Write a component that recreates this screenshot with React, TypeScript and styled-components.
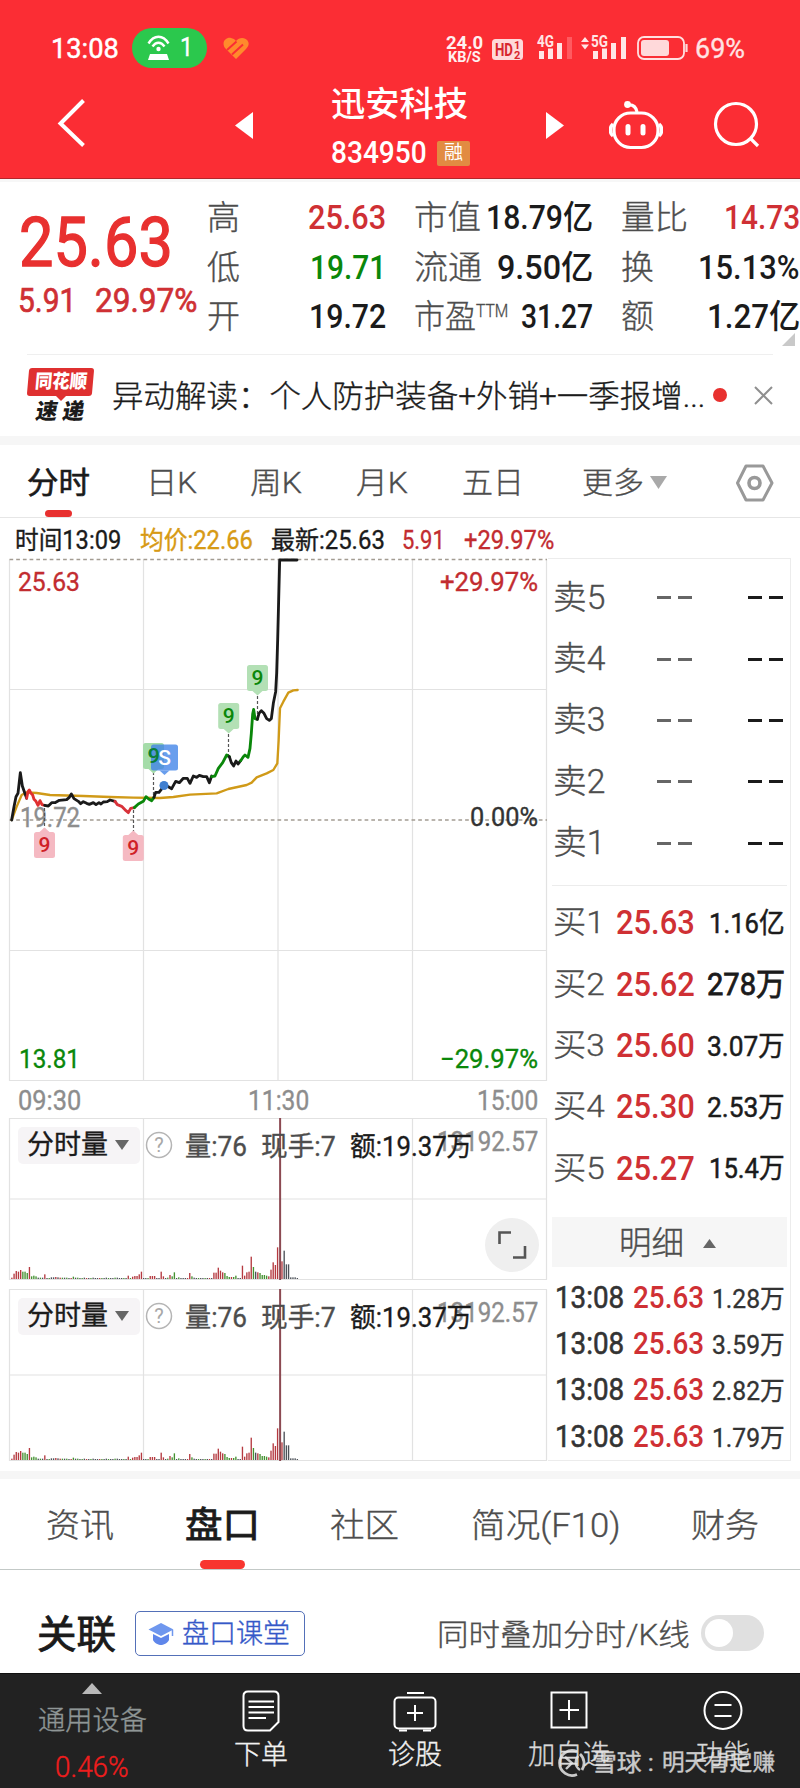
import React, { useLayoutEffect, useRef, useState } from "react";
import styled, { createGlobalStyle } from "styled-components";

const SANS = `Roboto, "Noto Sans CJK SC", sans-serif`;

const Global = createGlobalStyle`
  * { box-sizing: border-box; }
  body { margin: 0; background: #fff; font-family: ${SANS}; }
  svg { display: block; flex: none; }
`;

/* ---------- text that is condensed or stretched to a set width ---------- */
const FitBox = styled.span<{ $w: number; $ml: number; $lh: number; $size: number; $color: string; $weight: number; $stroke: number }>`
  display: block;
  flex: none;
  width: ${(p) => p.$w}px;
  margin-left: ${(p) => p.$ml}px;
  height: ${(p) => p.$lh}px;
  line-height: ${(p) => p.$lh}px;
  font-size: ${(p) => p.$size}px;
  font-weight: ${(p) => p.$weight};
  color: ${(p) => p.$color};
  -webkit-text-stroke: ${(p) => p.$stroke}px ${(p) => p.$color};
  white-space: pre;
`;
const FitInner = styled.span`
  display: inline-block;
  transform-origin: left center;
`;

type FitProps = { children: string; w: number; size: number; ml?: number; lh?: number; color?: string; weight?: number; stroke?: number };

function Fit({ children, w, size, ml = 0, lh = 40, color = "#1b1b1b", weight = 400, stroke }: FitProps) {
  const ref = useRef<HTMLSpanElement>(null);
  const [k, setK] = useState(1);
  useLayoutEffect(() => {
    if (ref.current) setK(w / ref.current.offsetWidth);
  }, [w, size, children, weight]);
  return (
    <FitBox $w={w} $ml={ml} $lh={lh} $size={size} $color={color} $weight={weight} $stroke={stroke ?? (weight <= 400 ? 0.35 : 0)}>
      <FitInner ref={ref} style={{ transform: `scaleX(${k})` }}>{children}</FitInner>
    </FitBox>
  );
}

/* ---------- page ---------- */
const Page = styled.div`
  width: 800px;
  height: 1788px;
  overflow: hidden;
  display: flex;
  flex-direction: column;
  background: #fff;
`;
const Band = styled.div<{ $h: number }>`
  height: ${(p) => p.$h}px;
  background: #f6f6f6;
  flex: none;
`;

/* ---------- header ---------- */
const Header = styled.header`
  height: 179px;
  background: #fb2d34;
  border-bottom: 1px solid #b3262b;
  flex: none;
`;
const StatusBar = styled.div`
  display: flex;
  align-items: center;
  height: 80px;
  padding: 17px 0 0 51px;
`;
const HotspotPill = styled.div`
  display: flex;
  align-items: center;
  width: 75px;
  height: 40px;
  margin: -2px 0 0 13px;
  padding-left: 15px;
  border-radius: 20px;
  background: #2bc84d;
`;
const Speed = styled.div`
  margin: 2px 0 0 197px;
`;
const NavBar = styled.div`
  display: flex;
  height: 98px;
  padding-left: 57px;
`;
const NavIcon = styled.div<{ $ml: number; $mt: number }>`
  margin: ${(p) => p.$mt}px 0 0 ${(p) => p.$ml}px;
`;
const TitleBlock = styled.div`
  width: 140px;
  margin-left: 77px;
`;
const CodeRow = styled.div`
  display: flex;
  align-items: center;
`;
const MarginBadge = styled.span`
  width: 33px;
  height: 25px;
  margin-left: 10px;
  border-radius: 2px;
  background: #e28b42;
  color: #fff;
  font-size: 19px;
  line-height: 24px;
  text-align: center;
`;

/* ---------- quote ---------- */
const Quote = styled.section`
  display: flex;
  height: 175px;
  border-top: 3px solid #f7f7f7;
  flex: none;
`;
const PriceCol = styled.div`
  width: 207px;
  padding: 28px 0 0 18px;
  flex: none;
`;
const Row = styled.div<{ $h: number; $pl?: number; $pt?: number }>`
  display: flex;
  align-items: center;
  height: ${(p) => p.$h}px;
  padding: ${(p) => p.$pt ?? 0}px 0 0 ${(p) => p.$pl ?? 0}px;
`;
const StatCol = styled.div<{ $w: number }>`
  width: ${(p) => p.$w}px;
  padding-top: 11px;
  flex: none;
`;
const StatRow = styled.div`
  display: flex;
  justify-content: space-between;
  height: 49.7px;
  align-items: center;
`;
const Super = styled.sup`
  margin-top: -13px;
  line-height: 1;
`;
const Corner = styled.div`
  width: 13px;
  height: 13px;
  margin: -9px 5px 0 auto;
  background: #c9c9c9;
  clip-path: polygon(100% 0, 100% 100%, 0 100%);
`;

/* ---------- news ---------- */
const News = styled.section`
  display: flex;
  height: 82px;
  margin: 0 27px;
  border-top: 1px solid #efefef;
  flex: none;
`;
const NewsLogo = styled.div`
  width: 67px;
  margin: 13px 0 0 1px;
`;
const LogoTop = styled.div`
  display: flex;
  justify-content: center;
  height: 28px;
  background: #df3030;
  border-radius: 3px;
  transform: skewX(-5deg);
`;
const LogoBottom = styled.div`
  display: flex;
  margin: -1px 0 0 8px;
  transform: skewX(-10deg);
`;
const Dot = styled.i`
  width: 14px;
  height: 14px;
  margin: 33px 27px 0 8px;
  border-radius: 50%;
  background: #e8312f;
`;

/* ---------- tabs ---------- */
const Tabs = styled.nav<{ $h: number; $pt: number; $line: string }>`
  height: ${(p) => p.$h}px;
  padding-top: ${(p) => p.$pt}px;
  border-bottom: 1px solid ${(p) => p.$line};
  flex: none;
`;
const Underline = styled.i<{ $ml: number; $w: number; $h: number; $mt: number; $color: string }>`
  display: block;
  width: ${(p) => p.$w}px;
  height: ${(p) => p.$h}px;
  margin: ${(p) => p.$mt}px 0 0 ${(p) => p.$ml}px;
  border-radius: 5px;
  background: ${(p) => p.$color};
`;

/* ---------- body of the charts and order book ---------- */
const Body = styled.section`
  display: flex;
  height: 913px;
  flex: none;
`;
const ChartCol = styled.div`
  width: 548px;
  padding-left: 8px;
  flex: none;
`;
const AxisRow = styled.div`
  display: flex;
  height: 37px;
  align-items: center;
  padding: 2px 0 0 10px;
`;
const VolPanel = styled.div<{ $h: number }>`
  position: relative;
  height: ${(p) => p.$h}px;
`;
const VolHead = styled.div`
  position: absolute;
  left: 0;
  top: 8px;
  display: flex;
  align-items: center;
  height: 38px;
`;
const VolButton = styled.div`
  display: flex;
  align-items: center;
  width: 122px;
  height: 37px;
  margin-left: 10px;
  padding-left: 9px;
  border-radius: 5px;
  background: #f6f4f6;
`;
const VolMax = styled.div`
  position: absolute;
  right: 10px;
  top: 4px;
`;
const Fullscreen = styled.div`
  position: absolute;
  right: 9px;
  bottom: 8px;
  width: 54px;
  height: 54px;
  border-radius: 50%;
  background: #efefef;
  display: grid;
  place-items: center;
`;
const Book = styled.div`
  width: 243px;
  height: 903px;
  border: 1px solid #ececec;
  border-left: 0;
  padding: 8px 3px 0 4px;
`;
const BookRow = styled.div`
  display: flex;
  align-items: center;
  height: 61.35px;
  padding-left: 1px;
`;
const Push = styled.div<{ $pt: number }>`
  margin-left: auto;
  padding: ${(p) => p.$pt}px 2px 0 0;
`;
const Dashes = styled.span<{ $c: string; $ml: number }>`
  display: flex;
  gap: 7px;
  margin-left: ${(p) => p.$ml}px;
  &::before, &::after { content: ""; width: 14px; height: 3px; background: ${(p) => p.$c}; }
`;
const BookRule = styled.div`
  height: 1px;
  margin: 11px 0 6px;
  background: #ececec;
`;
const DetailBar = styled.div`
  display: flex;
  align-items: center;
  height: 50px;
  margin: 19px 0 7px;
  padding: 2px 0 0 67px;
  background: #f6f6f6;
`;
const TradeRow = styled.div`
  display: flex;
  align-items: center;
  height: 46.4px;
  padding-left: 3px;
`;

/* ---------- related row ---------- */
const Related = styled.section`
  display: flex;
  height: 103px;
  padding: 41px 0 0 37px;
  flex: none;
`;
const ClassButton = styled.div`
  display: flex;
  align-items: center;
  width: 170px;
  height: 45px;
  margin-left: 19px;
  padding-left: 12px;
  border: 1.5px solid #5470b8;
  border-radius: 5px;
`;
const Toggle = styled.div`
  width: 63px;
  height: 36px;
  margin: 4px 0 0 11px;
  border-radius: 18px;
  background: #e0e0e0;
  padding: 4px;
  &::before { content: ""; display: block; width: 28px; height: 28px; border-radius: 50%; background: #fff; }
`;

/* ---------- footer ---------- */
const Footer = styled.footer`
  position: relative;
  display: flex;
  height: 116px;
  background: #222;
  border-top: 1px solid #111;
  flex: none;
`;
const IndexCell = styled.div`
  width: 184px;
  padding: 9px 0 0 38px;
`;
const FootItem = styled.div`
  width: 154px;
  display: flex;
  flex-direction: column;
  align-items: center;
  flex: none;
`;
const FootIcon = styled.div`
  height: 61px;
  padding-top: 16px;
`;
const Watermark = styled.div`
  position: absolute;
  left: 557px;
  top: 74px;
  display: flex;
  align-items: center;
  height: 30px;
  opacity: 0.86;
`;

/* ---------- data ---------- */
type Cell = [string, string, number, number, string];
const INK = "#1b1b1b";
const GREY = "#4d4d4d";
const RED = "#cf3034";
const GREEN = "#0a870a";

const stats: { w: number; rows: Cell[] }[] = [
  { w: 179, rows: [["高", "25.63", 33, 78, RED], ["低", "19.71", 33, 76, GREEN], ["开", "19.72", 33, 77, INK]] },
  { w: 179, rows: [["市值", "18.79亿", 67, 107, INK], ["流通", "9.50亿", 68, 96, INK], ["市盈", "31.27", 62, 72, INK]] },
  { w: 179, rows: [["量比", "14.73", 67, 76, RED], ["换", "15.13%", 33, 102, INK], ["额", "1.27亿", 33, 93, INK]] },
];

const bids: [string, string, string, number, number][] = [
  ["买1", "25.63", "1.16亿", 76, 28], ["买2", "25.62", "278万", 78, 31], ["买3", "25.60", "3.07万", 78, 28], ["买4", "25.30", "2.53万", 78, 28], ["买5", "25.27", "15.4万", 76, 28],
];
const trades = ["1.28万", "3.59万", "2.82万", "1.79万"];

const volume: [number, string][] = (
  "4r 16r 24r 22r 27r 22g 22g 18g 36r 8g 10g 8g 4k 4g 4k 14r 3k 3g 5k 5k 6r 5k 4r 4g 4k 4g 3k 3r 7g 4k 4g 3k 3g 4k 3r 3k 3g 4k 3k 3k 3r 3g 3k 4k 3g 3k 3k 4g 4k 3k 3k 3g 3k 10r 3g 7r 9r 9r 14r 22r 3k 3k 3g 9r 9r 9r 3k 3k 22r 8r 3k 4g 12r 8g 20g 3k 5g 3k 3k 3k 3r 18r 8g 4k 3k 3g 3k 3k 3g 3k 3r 3k 19r 19r 34r 25r 20r 18g 9g 6g 6r 6g 10g 3k 3k 40r 10r 20r 22r 67r 36g 22k 20r 18g 12g 12g 10g 8r 28r 50r 42r 95r 485w 53r 85k 44k 44k 5k 5k 5k 3k"
).split(" ").map((s) => [parseInt(s, 10) / 3, s.slice(-1)]);
const barColor: Record<string, string> = { r: "#b53a40", g: "#459232", k: "#4c5158", w: "#8c4a52" };

/* ---------- drawings ---------- */
const Tri = ({ w, h, c, up, ml = 0 }: { w: number; h: number; c: string; up?: boolean; ml?: number }) => (
  <svg width={w + ml} height={h} viewBox={`${-ml} 0 ${w + ml} ${h}`}>
    <path d={up ? `M0 ${h}L${w / 2} 0L${w} ${h}Z` : `M0 0H${w}L${w / 2} ${h}Z`} fill={c} />
  </svg>
);

const StatusIcons = () => (
  <svg width="203" height="28" viewBox="1 0 203 28" fill="#ffe6e6" fontFamily={SANS} fontWeight="700">
    <rect x="1" y="4" width="31" height="21" rx="3.5" fill="#ffd9da" />
    <text x="4" y="21" fontSize="18" fill="#d8262e" textLength="18" lengthAdjust="spacingAndGlyphs">HD</text>
    <text x="23" y="14" fontSize="11" fill="#d8262e">1</text>
    <text x="23" y="24" fontSize="11" fill="#d8262e">2</text>
    <text x="46" y="11.500" fontSize="16" textLength="17" lengthAdjust="spacingAndGlyphs">4G</text>
    <rect x="48" y="16" width="5" height="8" /><rect x="57" y="13.500" width="5" height="10.500" /><rect x="66" y="8" width="5" height="16" />
    <rect x="76" y="2" width="5" height="22" fill="#ff5a60" />
    <path d="M90 7l4-5 4 5zM90 9.500h8l-4 5z" />
    <text x="100" y="11.500" fontSize="16" textLength="17" lengthAdjust="spacingAndGlyphs">5G</text>
    <rect x="102" y="16" width="5" height="8" /><rect x="111" y="13.500" width="5" height="10.500" /><rect x="120" y="8" width="5" height="16" /><rect x="130" y="2" width="5" height="22" />
    <rect x="147" y="2" width="46" height="22" rx="6" fill="none" stroke="#ffe0e0" strokeWidth="1.800" />
    <rect x="150" y="5" width="28" height="16" rx="3" fill="#ffd9da" />
    <path d="M195.500 9v8" stroke="#ffd9da" strokeWidth="2.200" />
  </svg>
);

function Marker({ x, y, c, t, label, down, w = 21, h = 26 }: { x: number; y: number; c: string; t: string; label: string; down?: boolean; w?: number; h?: number }) {
  const l = x - w / 2;
  return (
    <g>
      <rect x={l} y={y} width={w} height={h} rx="2.500" fill={c} />
      <path d={down ? `M${x - 5} ${y + h}h10l-5 4.500z` : `M${x - 5} ${y}h10l-5-4.500z`} fill={c} />
      <text x={x} y={y + 20} fontSize="21" fontWeight="500" fill={t} textAnchor="middle">{label}</text>
    </g>
  );
}

const lines: [string, string][] = [
  ["#1a1a1a", "35,540 42,500 48,470 54,460 61,398 67,438 73,455 80,475"],
  ["#e03030", "80,475 84,455 88,450 93,460 98,465 102,478 108,484 114,496 120,482 126,494 134,496"],
  ["#1a1a1a", "134,496 145,498 155,488 165,488 178,481 200,479 208,472 214,462 222,476 235,484 242,491 250,485 260,490 268,493 280,488 288,494 297,488 303,492 310,486 322,485 330,480 345,484"],
  ["#d8323a", "345,484 352,494 365,499 378,512 385,518 392,505 403,503"],
  ["#0a870a", "403,503 415,492 430,484 438,470 446,477 455,482 462,472"],
  ["#1a1a1a", "462,472 467,457 477,457 484,448 492,436 505,440 515,446 527,424 538,428 550,415 562,415 570,430 580,408 590,412 598,406 610,410 620,410 628,428 635,408"],
  ["#0a870a", "635,410 645,408 655,385 668,368 680,345 688,350"],
  ["#1a1a1a", "688,350 694,368 701,378 708,363 714,372 722,362"],
  ["#0a870a", "722,362 730,350 735,345 744,352 750,325 754,280 758,222 761,208 765,236 772,238"],
  ["#1a1a1a", "772,238 777,220 784,212 792,220 800,236 808,241 814,236 820,190 827,155 830,100 833,0 839,-240 891,-240"],
];

const PriceChart = () => (
  <svg width="540" height="523" viewBox="8 558 540 523" fontFamily={SANS} fontSize="26">
    <path d="M9.500 559.500V1080.500H546.500V559.500M143.500 559.500V1081M278 559.500V1081M412.500 559.500V1081M9.500 689.500H547M9.500 950.500H547" fill="none" stroke="#e2e2e2" strokeWidth="1.200" />
    <path d="M9.500 559.500H547M9.500 820H547" stroke="#a39c92" strokeWidth="1.500" strokeDasharray="3.700 3" />
    <text x="20" y="827" fill="#8d8d8d" fontSize="27" stroke="#8d8d8d" strokeWidth=".4" textLength="60" lengthAdjust="spacingAndGlyphs">19.72</text>
    <path d="M44.500 808v22M133.500 810v22M153.500 772v30M228.500 734v24M257.500 696v24" stroke="#555" strokeWidth="1.200" strokeDasharray="3 2" />
    <g transform="translate(0 640) scale(.33333)" fill="none" strokeLinejoin="round" strokeLinecap="round">
      <polyline stroke="#d09a18" strokeWidth="7" points="35,540 50,500 65,465 80,457 110,459 150,465 250,468 330,471 400,473 480,474 520,471 570,464 650,460 685,447 740,435 755,428 770,412 800,400 820,390 832,370 836,300 840,205 850,185 865,158 880,151 893,150" />
      {lines.map(([c, pts]) => <polyline key={pts} stroke={c} strokeWidth="8.500" points={pts} />)}
    </g>
    <circle cx="164" cy="785.500" r="4.500" fill="#3f7fd0" />
    <Marker x={44.500} y={832} c="#f5b9c2" t="#cf2026" label="9" />
    <Marker x={133.300} y={835} c="#f5b9c2" t="#cf2026" label="9" />
    <Marker x={153.500} y={743} c="#a5dca9" t="#0a870a" label="9" down />
    <Marker x={164.500} y={744.500} c="rgba(63,131,232,.78)" t="#fff" label="S" down w={27} />
    <text x="148" y="763" fontSize="21" fontWeight="500" fill="#0a7f3a">9</text>
    <Marker x={228.700} y={703} c="#b3e0b5" t="#0a870a" label="9" down />
    <Marker x={257.500} y={665} c="#b3e0b5" t="#0a870a" label="9" down />
    <g strokeWidth=".35">
      <text x="18" y="591" fill="#c22c30" stroke="#c22c30" textLength="62" lengthAdjust="spacingAndGlyphs">25.63</text>
      <text x="440" y="591" fill="#c22c30" stroke="#c22c30" textLength="98" lengthAdjust="spacingAndGlyphs">+29.97%</text>
      <text x="470" y="826" fill="#333" stroke="#333" textLength="68" lengthAdjust="spacingAndGlyphs">0.00%</text>
      <text x="19" y="1068" fill="#0a870a" stroke="#0a870a" textLength="61" lengthAdjust="spacingAndGlyphs">13.81</text>
      <text x="440" y="1068" fill="#0a870a" stroke="#0a870a" textLength="98" lengthAdjust="spacingAndGlyphs">−29.97%</text>
    </g>
  </svg>
);

const VolumeChart = ({ h, mid }: { h: number; mid: number }) => (
  <svg width="540" height={h} viewBox={`8 0 540 ${h}`}>
    <path d={`M9.500 .5H546.500V${h - 0.5}H9.500ZM143.500 0V${h}M412.500 0V${h}M9.500 ${mid}H547`} fill="none" stroke="#e2e2e2" strokeWidth="1.200" />
    {volume.map(([v, c], i) => (
      <rect key={i} x={11.2 + i * 2.196} y={c === "w" ? 0 : h - 1 - v} width={c === "w" ? 2 : 1.35} height={c === "w" ? h : v} fill={barColor[c]} />
    ))}
  </svg>
);

const HelpIcon = styled.div`
  margin: 0 0 0 5px;
`;

const Volume = ({ h, mid, full }: { h: number; mid: number; full?: boolean }) => (
  <VolPanel $h={h}>
    <VolMax><Fit w={101} size={27} color="#8d8d8d">13192.57</Fit></VolMax>
    <VolHead>
      <VolButton>
        <Fit w={81} size={27} lh={44} color={INK}>分时量</Fit>
        <Tri w={14} h={10} c="#666" ml={7} />
      </VolButton>
      <HelpIcon>
        <svg width="28" height="28" viewBox="0 0 28 28">
          <circle cx="14" cy="14" r="12.500" fill="none" stroke="#b5b5b5" strokeWidth="1.500" />
          <text x="14" y="21" fontSize="20" textAnchor="middle" fill="#a8a8a8" fontFamily={SANS}>?</text>
        </svg>
      </HelpIcon>
      <Row $h={38} $pt={4}>
        <Fit w={62} size={27} ml={12} color={GREY}>量:76</Fit>
        <Fit w={75} size={27} ml={14} color={GREY}>现手:7</Fit>
        <Fit w={122} size={27} ml={14} color={INK}>额:19.37万</Fit>
      </Row>
    </VolHead>
    <VolumeChart h={h} mid={mid} />
    {full && (
      <Fullscreen>
        <svg width="30" height="30" viewBox="0 0 30 30" fill="none" stroke="#555" strokeWidth="2.600"><path d="M2.500 14V2.500H14M28 16V27.500H16" /></svg>
      </Fullscreen>
    )}
  </VolPanel>
);

export default function App() {
  return (
    <Page>
      <Global />
      <Header>
        <StatusBar>
          <Fit w={68} size={28} color="#fff" stroke={0.5}>13:08</Fit>
          <HotspotPill>
            <svg width="23" height="26" viewBox="0 0 23 26" fill="none" stroke="#fff" strokeWidth="2.400">
              <path d="M1.500 8.500C7-.5 16-.5 21.500 8.500" /><path d="M5.500 11.500c3.500-5 8.500-5 12 0" />
              <circle cx="11.500" cy="14" r="2.200" fill="#fff" stroke="none" />
              <path d="M3 19h17l2 6H1z" fill="#fff" stroke="none" />
            </svg>
            <Fit w={13} size={25} ml={10} lh={44} color="#fff">1</Fit>
          </HotspotPill>
          <NavIcon $ml={16} $mt={0}>
            <svg width="26" height="23" viewBox="0 0 26 23">
              <path d="M13 22L2 11C-2 5 3 0 8 1c2 .3 4 1.500 5 3 3-4 9-4 11.500-.5S25 10 23 12Z" fill="#ff8a2c" />
              <path d="M4 13L13.500 4.500M9 17.500L20 7.500" stroke="#fb2d34" strokeWidth="2" />
            </svg>
          </NavIcon>
          <Speed>
            <Fit w={37} size={18} lh={15} color="#fff0f0" weight={700}>24.0</Fit>
            <Fit w={33} size={14} lh={15} ml={2} color="#fff0f0" weight={700}>KB/S</Fit>
          </Speed>
          <NavIcon $ml={9} $mt={0}><StatusIcons /></NavIcon>
          <Fit w={50} size={28} ml={0} color="#ffe3e3">69%</Fit>
        </StatusBar>
        <NavBar>
          <NavIcon $ml={0} $mt={18}>
            <svg width="30" height="50" viewBox="0 0 30 50" fill="none" stroke="#fff" strokeWidth="4"><path d="M26.500 2.500L3.500 25.500L26.500 47.500" /></svg>
          </NavIcon>
          <NavIcon $ml={148} $mt={32}><svg width="19" height="27" viewBox="0 0 19 27"><path d="M18 0V27L0 13.500Z" fill="#fff" /></svg></NavIcon>
          <TitleBlock>
            <Fit w={137} size={34} lh={48} color="#fff" weight={500}>迅安科技</Fit>
            <CodeRow>
              <Fit w={96} size={31} color="#fff" weight={500} lh={50}>834950</Fit>
              <MarginBadge>融</MarginBadge>
            </CodeRow>
          </TitleBlock>
          <NavIcon $ml={75} $mt={32}><svg width="19" height="27" viewBox="0 0 19 27"><path d="M0 0V27L18 13.500Z" fill="#fff" /></svg></NavIcon>
          <NavIcon $ml={44} $mt={20}>
            <svg width="54" height="50" viewBox="0 0 54 50" fill="none" stroke="#fff" strokeWidth="3.200">
              <circle cx="18.500" cy="4.500" r="3.400" fill="#fff" stroke="none" />
              <path d="M19 5C24 4.500 27 7 28 12" />
              <rect x="5" y="13" width="44" height="34.500" rx="16.500" />
              <path d="M4 24C.5 27 .5 33 4 36M50 24c3.500 3 3.500 9 0 12" strokeWidth="3.500" />
              <path d="M19 26.500v6.500M34 26.500v6.500" strokeWidth="5" strokeLinecap="round" />
            </svg>
          </NavIcon>
          <NavIcon $ml={50} $mt={21}>
            <svg width="48" height="48" viewBox="0 0 48 48" fill="none" stroke="#fff" strokeWidth="3.200"><circle cx="23" cy="23" r="20.500" /><path d="M37 37l8 8" /></svg>
          </NavIcon>
        </NavBar>
      </Header>

      <Quote>
        <PriceCol>
          <Fit w={154} size={68} lh={66} ml={1} color="#e8302f" stroke={1.3}>25.63</Fit>
          <Row $h={48}>
            <Fit w={58} size={34} color={RED} stroke={0.7}>5.91</Fit>
            <Fit w={102} size={34} ml={19} color={RED} stroke={0.7}>29.97%</Fit>
          </Row>
        </PriceCol>
        {stats.map((col, i) => (
          <React.Fragment key={i}>
            <StatCol $w={col.w}>
              {col.rows.map(([l, v, lw, vw, c]) => (
                <StatRow key={l}>
                  <Row $h={40}>
                    <Fit w={lw} size={33} color={GREY} weight={300}>{l}</Fit>
                    {l === "市盈" && <Super><Fit w={32} size={18} lh={18} color={GREY} weight={300}>TTM</Fit></Super>}
                  </Row>
                  <Fit w={vw} size={33} color={c} weight={500}>{v}</Fit>
                </StatRow>
              ))}
              {i === 2 && <Corner />}
            </StatCol>
            {i < 2 && <StatCol $w={28} />}
          </React.Fragment>
        ))}
      </Quote>

      <News>
        <NewsLogo>
          <LogoTop><Fit w={52} size={19} lh={28} color="#fff" weight={900}>同花顺</Fit></LogoTop>
          <Tri w={10} h={5} c="#df3030" ml={28} />
          <LogoBottom><Fit w={48} size={22} lh={23} weight={900}>速 递</Fit></LogoBottom>
        </NewsLogo>
        <Fit w={593} size={31} ml={19} lh={84} weight={300}>异动解读：个人防护装备+外销+一季报增...</Fit>
        <Dot />
        <svg width="19" height="80" viewBox="0 0 19 80" fill="none" stroke="#8f8f8f" strokeWidth="2"><path d="M1 32L18 49M18 32L1 49" /></svg>
      </News>
      <Band $h={9} />

      <Tabs $h={73} $pt={15} $line="#e6e6e6">
        <Row $h={45} $pl={27}>
          <Fit w={63} size={30} color={INK} stroke={0.6}>分时</Fit>
          <Fit w={51} size={30} ml={56} color={GREY} weight={300}>日K</Fit>
          <Fit w={52} size={30} ml={53} color={GREY} weight={300}>周K</Fit>
          <Fit w={52} size={30} ml={54} color={GREY} weight={300}>月K</Fit>
          <Fit w={62} size={30} ml={54} color={GREY} weight={300}>五日</Fit>
          <Fit w={62} size={30} ml={58} color={GREY} weight={300}>更多</Fit>
          <Tri w={17} h={13} c="#a9a9a9" ml={6} />
          <svg width="107" height="38" viewBox="-69 0 107 38" fill="none" stroke="#999" strokeWidth="3" strokeLinejoin="round">
            <path d="M10 2H27L36 19L27 36H10L1.500 19Z" /><circle cx="18.500" cy="19" r="5.500" strokeWidth="3.600" />
          </svg>
        </Row>
        <Underline $ml={45} $w={27} $h={7} $mt={5} $color="#e8302f" />
      </Tabs>

      <Row $h={40} $pl={15} $pt={6}>
        <Fit w={106} size={25} color={INK}>时间13:09</Fit>
        <Fit w={113} size={25} ml={19} color="#d79a15">均价:22.66</Fit>
        <Fit w={114} size={25} ml={18} color={INK}>最新:25.63</Fit>
        <Fit w={43} size={25} ml={17} color="#c22c30">5.91</Fit>
        <Fit w={90} size={25} ml={19} color="#c22c30">+29.97%</Fit>
      </Row>

      <Body>
        <ChartCol>
          <PriceChart />
          <AxisRow>
            <Fit w={63} size={27} color="#8d8d8d">09:30</Fit>
            <Fit w={61} size={27} ml={167} color="#8d8d8d">11:30</Fit>
            <Fit w={61} size={27} ml={168} color="#8d8d8d">15:00</Fit>
          </AxisRow>
          <Volume h={162} mid={81} full />
          <Row $h={9} />
          <Volume h={172} mid={86} />
        </ChartCol>
        <Book>
          {[5, 4, 3, 2, 1].map((n) => (
            <BookRow key={n}>
              <Fit w={52} size={33} color={GREY} weight={300}>{`卖${n}`}</Fit>
              <Dashes $c="#666" $ml={52} />
              <Dashes $c="#1b1b1b" $ml={56} />
            </BookRow>
          ))}
          <BookRule />
          {bids.map(([l, p, v, w, s], i) => (
            <BookRow key={l}>
              <Fit w={52} size={32} color={GREY} weight={300}>{l}</Fit>
              <Fit w={79} size={34} ml={11} color={RED} weight={500}>{p}</Fit>
              <Push $pt={3}><Fit w={w} size={s} color={INK} lh={42} stroke={i === 1 ? 0.8 : 0.5}>{v}</Fit></Push>
            </BookRow>
          ))}
          <DetailBar>
            <Fit w={65} size={32} lh={44} color={GREY} weight={300}>明细</Fit>
            <Tri w={13} h={9} c="#666" up ml={19} />
          </DetailBar>
          {trades.map((t) => (
            <TradeRow key={t}>
              <Fit w={69} size={31} color="#333" stroke={0.6}>13:08</Fit>
              <Fit w={71} size={31} ml={9} color={RED} weight={500}>25.63</Fit>
              <Push $pt={2}><Fit w={73} size={26} color="#333" lh={42}>{t}</Fit></Push>
            </TradeRow>
          ))}
        </Book>
      </Body>
      <Band $h={8} />

      <Tabs $h={91} $pt={24} $line="#c3c9c7">
        <Row $h={46} $pl={46}>
          <Fit w={68} size={33} color={GREY} weight={300}>资讯</Fit>
          <Fit w={75} size={36} ml={71} color={INK} stroke={0.9}>盘口</Fit>
          <Fit w={69} size={33} ml={70} color={GREY} weight={300}>社区</Fit>
          <Fit w={149} size={33} ml={72} color={GREY} weight={300}>简况(F10)</Fit>
          <Fit w={68} size={33} ml={71} color={GREY} weight={300}>财务</Fit>
        </Row>
        <Underline $ml={200} $w={45} $h={9} $mt={11} $color="#f8352f" />
      </Tabs>

      <Related>
        <Fit w={79} size={39} lh={49} color={INK} stroke={0.9}>关联</Fit>
        <ClassButton>
          <svg width="26" height="24" viewBox="0 0 26 24">
            <path d="M13 1L25.500 7.500L13 14L.5 7.500Z" fill="#6f97ee" />
            <path d="M5 12l8 4 8-4v6c-1 3-6 5-8 5s-7-2-8-5z" fill="#5f86ea" /><path d="M24.500 8v6" stroke="#6f97ee" strokeWidth="1.500" />
          </svg>
          <Fit w={108} size={27} ml={8} color="#3558c8" weight={300}>盘口课堂</Fit>
        </ClassButton>
        <Fit w={253} size={30} ml={132} lh={47} color={GREY} weight={300}>同时叠加分时/K线</Fit>
        <Toggle />
      </Related>

      <Footer>
        <IndexCell>
          <Tri w={20} h={11} c="#b9b9b9" up ml={44} />
          <Fit w={109} size={27} lh={54} color="#8f9696" weight={300}>通用设备</Fit>
          <Fit w={74} size={29} ml={17} lh={38} color="#ee1d1d" weight={300}>0.46%</Fit>
        </IndexCell>
        <FootItem>
          <FootIcon>
            <svg width="38" height="42" viewBox="0 0 38 42" fill="none" stroke="#fff" strokeWidth="2">
              <path d="M6 1.500H32Q36.500 1.500 36.500 6V32L28 40.500H6Q1.500 40.500 1.500 36V6Q1.500 1.500 6 1.500Z" />
              <path d="M6.500 11.500H32M6.500 17H32M6.500 22.500H32M6.500 28H24" />
            </svg>
          </FootIcon>
          <Fit w={54} size={27} color="#f2f2f2" weight={300}>下单</Fit>
        </FootItem>
        <FootItem>
          <FootIcon>
            <svg width="44" height="42" viewBox="0 0 44 42" fill="none" stroke="#fff" strokeWidth="2">
              <path d="M14 3H31" /><rect x="1.500" y="7.500" width="41" height="31" rx="4" /><path d="M22 15V31M14 23H30M6 40.500H14M30 40.500H38" />
            </svg>
          </FootIcon>
          <Fit w={54} size={27} color="#f2f2f2" weight={300}>诊股</Fit>
        </FootItem>
        <FootItem>
          <FootIcon>
            <svg width="38" height="40" viewBox="0 0 38 40" fill="none" stroke="#fff" strokeWidth="2">
              <rect x="1.500" y="2.500" width="35" height="35" /><path d="M19 10V30M9.500 20H29" />
            </svg>
          </FootIcon>
          <Fit w={82} size={27} color="#d9d9d9" weight={300}>加自选</Fit>
        </FootItem>
        <FootItem>
          <FootIcon>
            <svg width="40" height="40" viewBox="0 0 40 40" fill="none" stroke="#fff" strokeWidth="2">
              <circle cx="20" cy="20.500" r="18.500" /><path d="M11.500 15H28.500M11.500 26H28.500" />
            </svg>
          </FootIcon>
          <Fit w={54} size={27} color="#d9d9d9" weight={300}>功能</Fit>
        </FootItem>
        <Watermark>
          <svg width="30" height="30" viewBox="0 0 30 30" fill="none" stroke="#e6e6e6" strokeWidth="2.800">
            <path d="M20 3.500A12.500 12.500 0 1 0 20 26.500M23 6A12.500 12.500 0 0 1 25 22" />
            <path d="M8 9l7 6-6 6M21 8c-3 4-4 10 2 14" strokeWidth="2.400" />
          </svg>
          <Fit w={62} size={24} ml={5} color="#e6e6e6">雪球 :</Fit>
          <Fit w={113} size={23} ml={8} color="#e6e6e6">明天肯定赚</Fit>
        </Watermark>
      </Footer>
    </Page>
  );
}
